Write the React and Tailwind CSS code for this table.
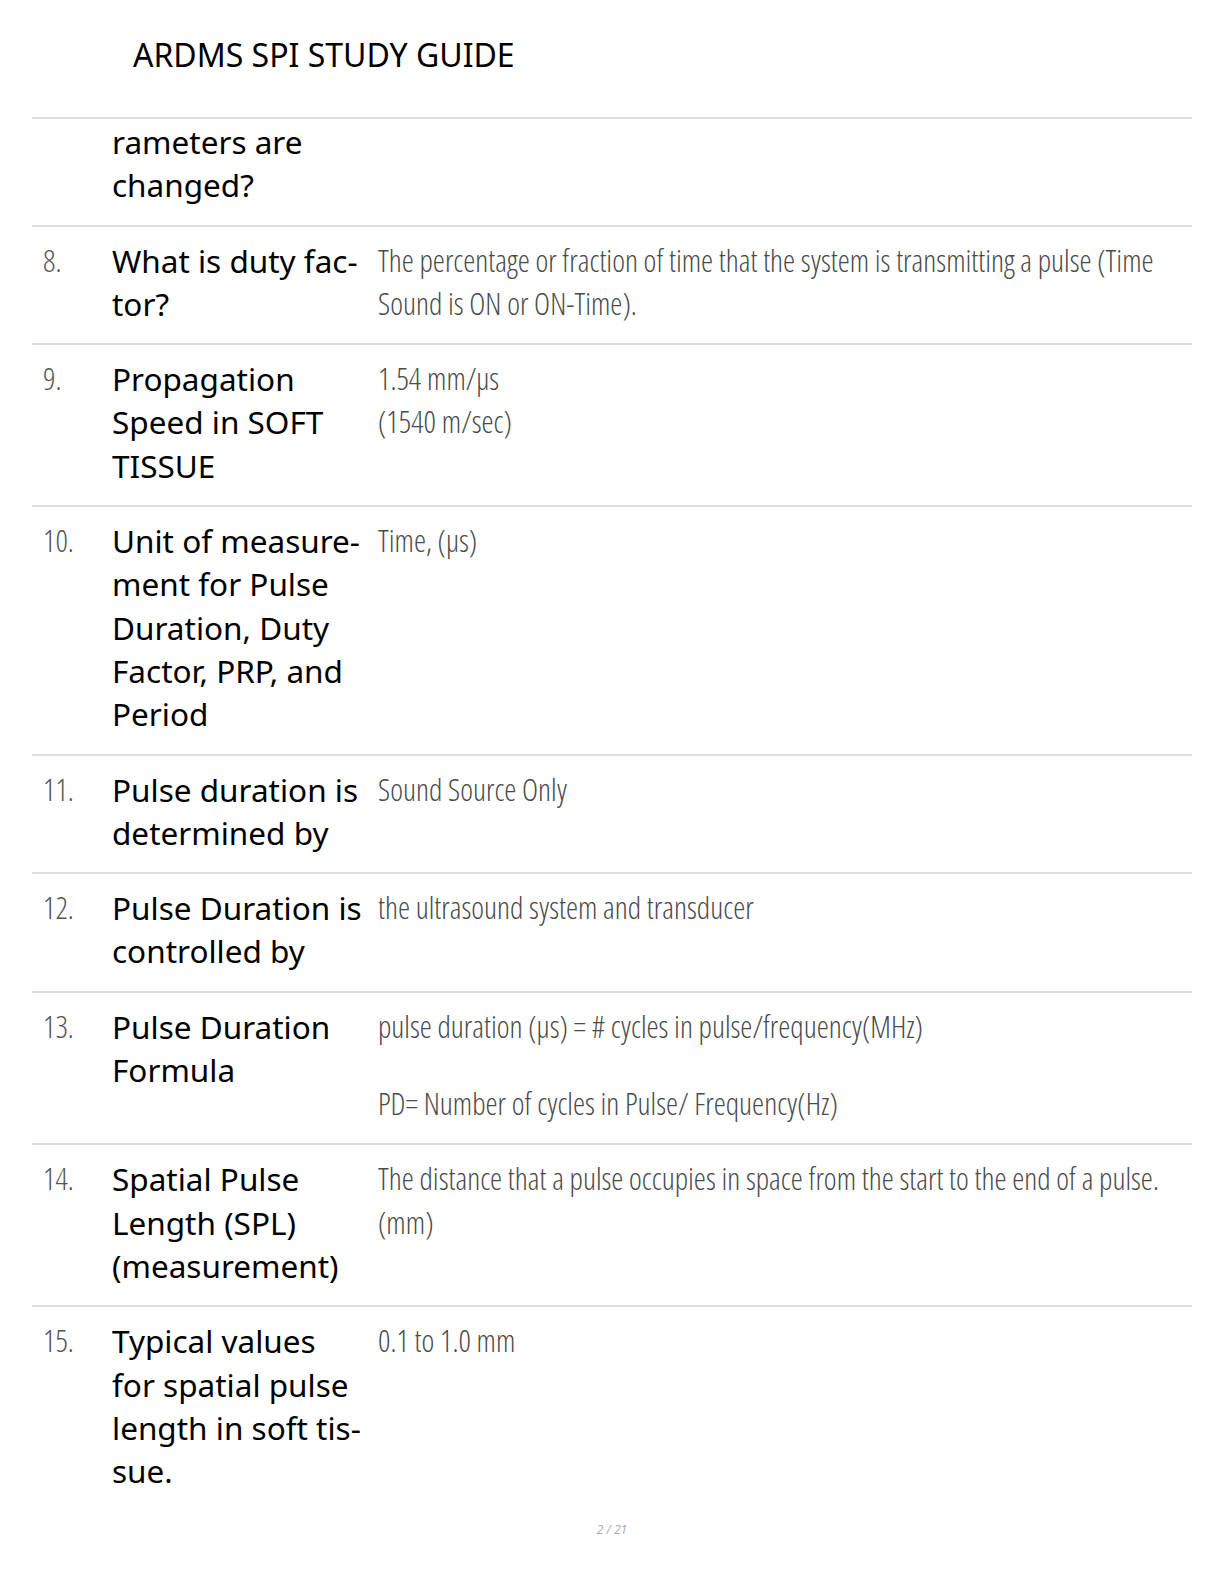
import React from "react";

const rows = [
  { n: "", q: ["rameters are", "changed?"], a: [], first: true },
  {
    n: "8.",
    q: ["What is duty fac-", "tor?"],
    a: ["The percentage or fraction of time that the system is transmitting a pulse (Time Sound is ON or ON-Time)."],
  },
  { n: "9.", q: ["Propagation", "Speed in SOFT", "TISSUE"], a: ["1.54 mm/µs\n(1540 m/sec)"] },
  {
    n: "10.",
    q: ["Unit of measure-", "ment for Pulse", "Duration, Duty", "Factor, PRP, and", "Period"],
    a: ["Time, (µs)"],
  },
  { n: "11.", q: ["Pulse duration is", "determined by"], a: ["Sound Source Only"] },
  { n: "12.", q: ["Pulse Duration is", "controlled by"], a: ["the ultrasound system and transducer"] },
  {
    n: "13.",
    q: ["Pulse Duration", "Formula"],
    a: [
      "pulse duration (µs) = # cycles in pulse/frequency(MHz)",
      "PD= Number of cycles in Pulse/ Frequency(Hz)",
    ],
  },
  {
    n: "14.",
    q: ["Spatial Pulse", "Length (SPL)", "(measurement)"],
    a: ["The distance that a pulse occupies in space from the start to the end of a pulse. (mm)"],
  },
  {
    n: "15.",
    q: ["Typical values", "for spatial pulse", "length in soft tis-", "sue."],
    a: ["0.1 to 1.0 mm"],
  },
];

const thin = "font-['Open_Sans','Noto_Sans',sans-serif] font-light [font-stretch:75%]";

function Row({ row }) {
  return (
    <div
      className={
        "flex border-t-2 border-[#dcdde3] pb-[18px] " + (row.first ? "pt-[1px]" : "pt-[12px]")
      }
    >
      <div className={"w-[80px] shrink-0 pl-[11px] text-[30.5px] leading-[43.3px] text-[#555] " + thin}>
        {row.n}
      </div>
      <div className="w-[266px] shrink-0 text-[31.5px] leading-[43.3px] text-black font-['Noto_Sans',sans-serif]">
        {row.q.map((l, i) => (
          <div key={i} className="whitespace-nowrap">
            {l}
          </div>
        ))}
      </div>
      <div className={"flex-1 pr-[22px] text-[30.5px] leading-[43.3px] text-[#4a4a4a] " + thin}>
        {row.a.map((p, i) => (
          <p key={i} className={"whitespace-pre-line " + (i > 0 ? "mt-[34px]" : "")}>
            {p}
          </p>
        ))}
      </div>
    </div>
  );
}

export default function App() {
  return (
    <div className="w-[1224px] h-[1584px] bg-white">
      <div className="pl-[133px] pt-[35px] pb-[42px] text-[32px] leading-[40px] text-black font-['Noto_Sans',sans-serif]">
        ARDMS SPI STUDY GUIDE
      </div>
      <div className="ml-[32px] w-[1160px]">
        {rows.map((r, i) => (
          <Row key={i} row={r} />
        ))}
      </div>
      <div className="mt-[11px] text-center text-[12px] italic text-[#aaa] font-['Open_Sans',sans-serif]">
        2 / 21
      </div>
    </div>
  );
}
